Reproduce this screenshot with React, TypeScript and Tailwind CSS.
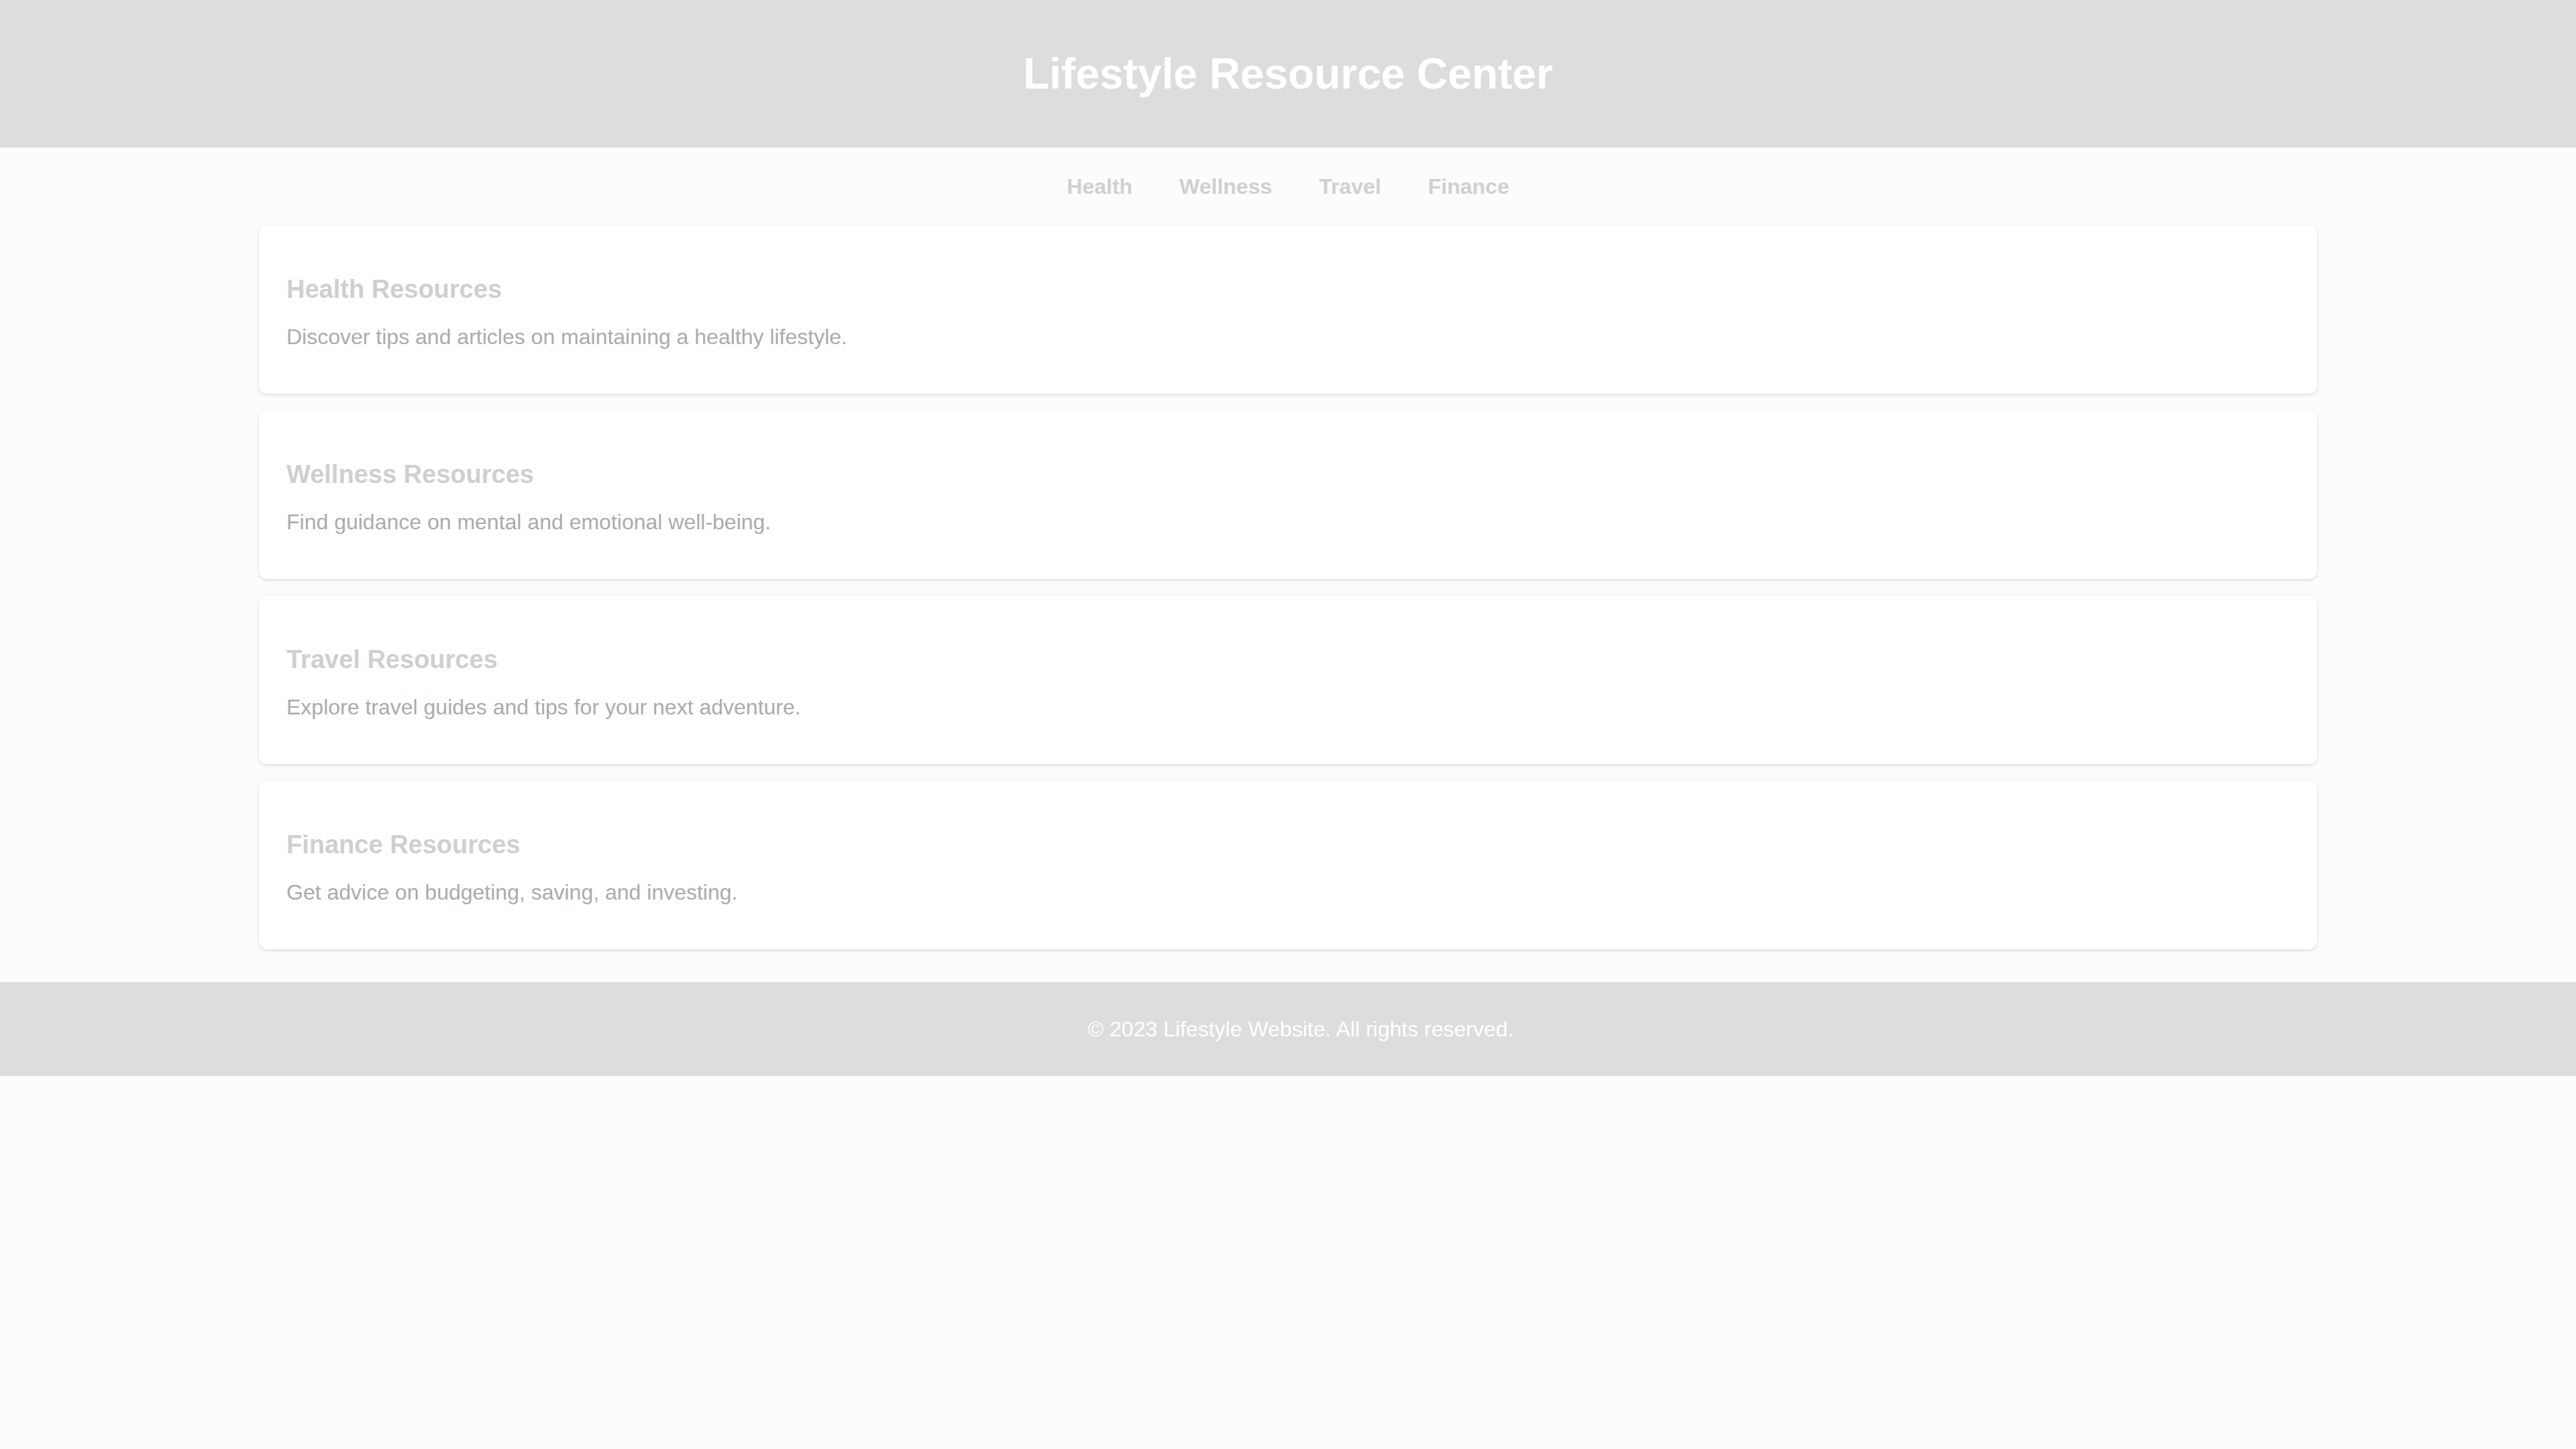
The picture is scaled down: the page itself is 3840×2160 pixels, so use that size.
import React from "react";

const sections = [
  { title: "Health Resources", text: "Discover tips and articles on maintaining a healthy lifestyle." },
  { title: "Wellness Resources", text: "Find guidance on mental and emotional well-being." },
  { title: "Travel Resources", text: "Explore travel guides and tips for your next adventure." },
  { title: "Finance Resources", text: "Get advice on budgeting, saving, and investing." },
];

const links = ["Health", "Wellness", "Travel", "Finance"];

export default function App() {
  return (
    <div className="min-h-[2160px] w-full bg-[#fcfcfc] font-['Liberation_Sans',Arial,sans-serif]">
      <header className="flex h-[220px] items-center justify-center bg-[#dddddd]">
        <h1 className="text-[64px] font-bold leading-[74px] text-white">Lifestyle Resource Center</h1>
      </header>

      <nav className="flex justify-center gap-[70px] py-[34px]">
        {links.map((l) => (
          <a key={l} href="#" className="text-[32px] font-bold leading-[48px] text-[#d0d0d0]">
            {l}
          </a>
        ))}
      </nav>

      <main className="mx-auto flex w-[3068px] flex-col gap-[25px]">
        {sections.map((s) => (
          <section
            key={s.title}
            className="rounded-[12px] bg-white px-[41px] pt-[66px] pb-[61px] shadow-[0_2px_4px_rgba(0,0,0,0.11),0_0_12px_rgba(0,0,0,0.03)]"
          >
            <h2 className="text-[38px] font-bold leading-[58px] text-[#cfcfcf]">{s.title}</h2>
            <p className="mt-[18px] text-[32px] leading-[48px] text-[#ababab]">{s.text}</p>
          </section>
        ))}
      </main>

      <footer className="mt-[49px] flex h-[140px] items-center justify-center bg-[#dddddd] pl-[38px]">
        <p className="text-[32px] leading-[48px] text-white">© 2023 Lifestyle Website. All rights reserved.</p>
      </footer>
    </div>
  );
}
